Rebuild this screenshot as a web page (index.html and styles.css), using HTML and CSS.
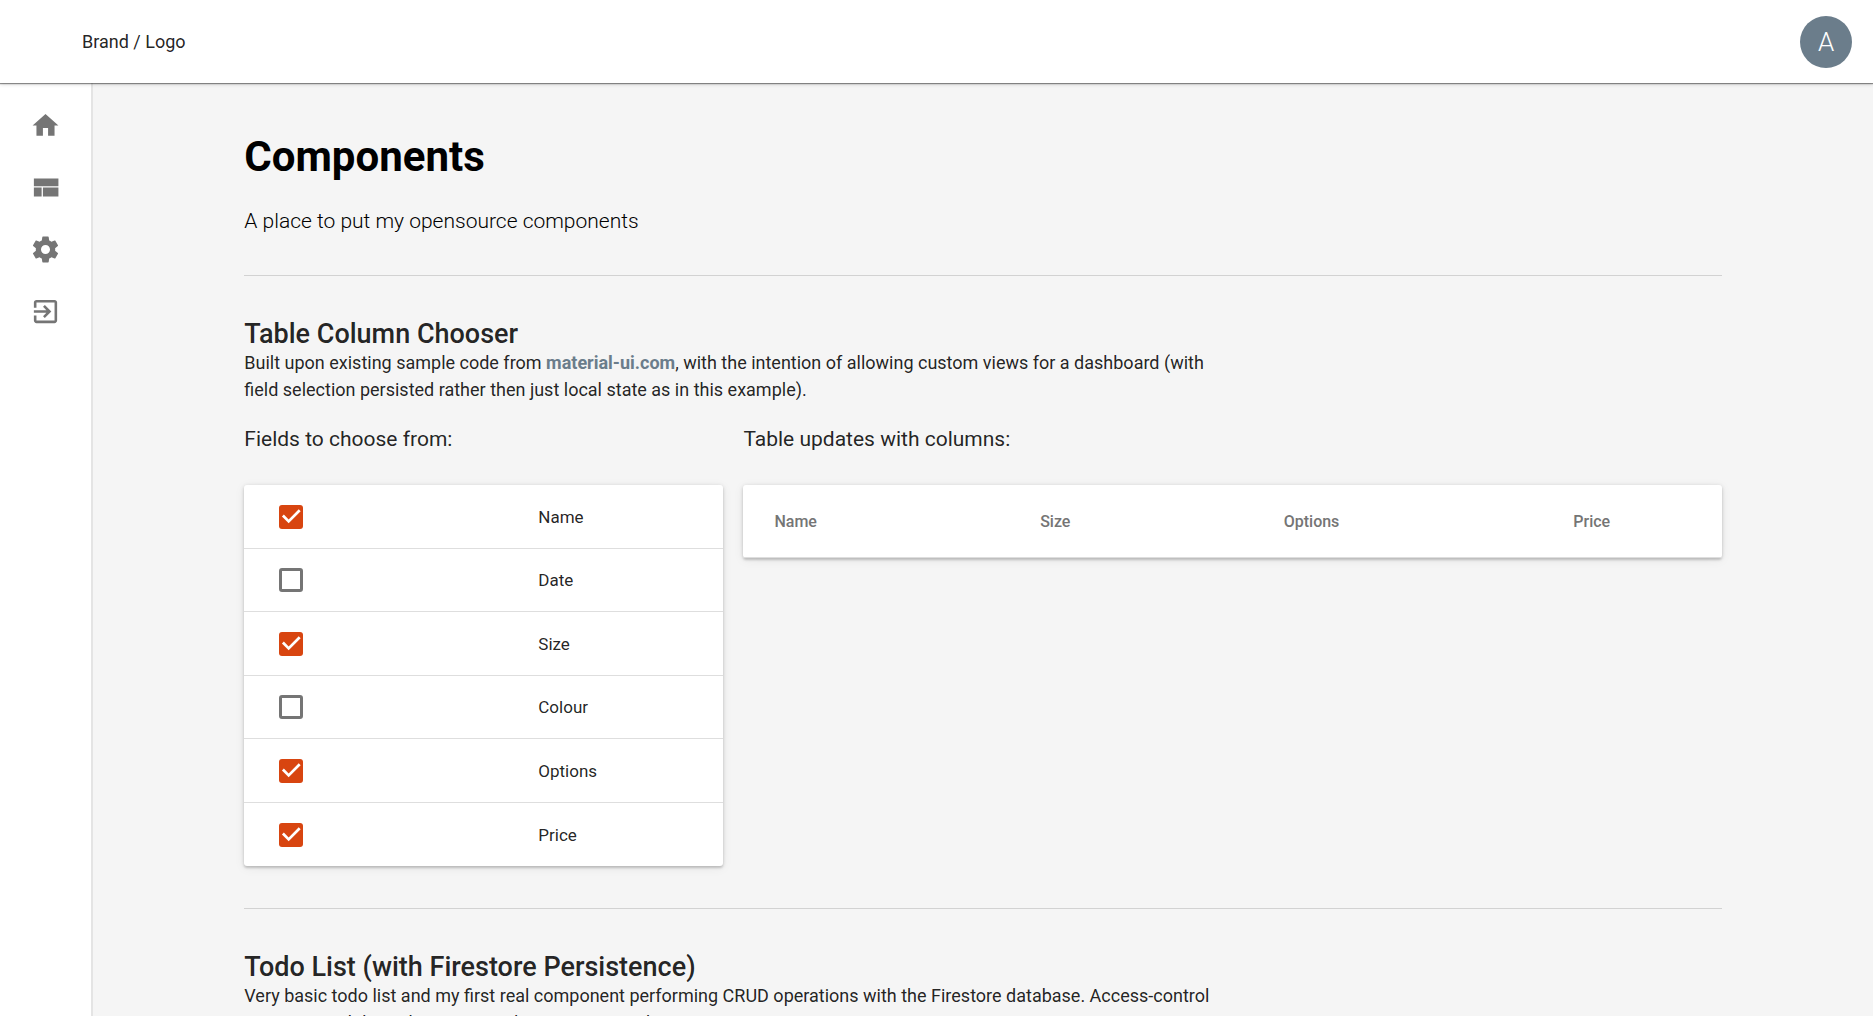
FILE: index.html
```html
<!DOCTYPE html>
<html lang="en">
<head>
<meta charset="utf-8">
<meta name="viewport" content="width=device-width, initial-scale=1">
<title>Components</title>
<link rel="stylesheet" href="styles.css">
</head>
<body>
<div class="app">
  <header class="topbar">
    <span class="brand">Brand / Logo</span>
    <button class="avatar" type="button">A</button>
  </header>
  <div class="shell">
    <nav class="sidebar" aria-label="Main">
      <a class="nav-link" href="#" aria-label="Home"><svg class="icon" viewBox="0 0 24 24"><path d="M10 20v-6h4v6h5v-8h3L12 3 2 12h3v8z"/></svg></a>
      <a class="nav-link" href="#" aria-label="Components"><svg class="icon" viewBox="0 0 24 24"><path d="M3 19h6v-7H3v7zm7 0h12v-7H10v7zM3 5v6h19V5H3z"/></svg></a>
      <a class="nav-link" href="#" aria-label="Settings"><svg class="icon" viewBox="0 0 24 24"><path d="M19.43 12.98c.04-.32.07-.64.07-.98s-.03-.66-.07-.98l2.11-1.65c.19-.15.24-.42.12-.64l-2-3.46c-.12-.22-.39-.3-.61-.22l-2.49 1c-.52-.4-1.08-.73-1.69-.98l-.38-2.65C14.46 2.18 14.25 2 14 2h-4c-.25 0-.46.18-.49.42l-.38 2.65c-.61.25-1.17.59-1.69.98l-2.49-1c-.23-.09-.49 0-.61.22l-2 3.46c-.13.22-.07.49.12.64l2.11 1.65c-.04.32-.07.65-.07.98s.03.66.07.98l-2.11 1.65c-.19.15-.24.42-.12.64l2 3.46c.12.22.39.3.61.22l2.49-1c.52.4 1.08.73 1.69.98l.38 2.65c.03.24.24.42.49.42h4c.25 0 .46-.18.49-.42l.38-2.65c.61-.25 1.17-.59 1.69-.98l2.49 1c.23.09.49 0 .61-.22l2-3.46c.12-.22.07-.49-.12-.64l-2.11-1.65zM12 15.5c-1.93 0-3.5-1.57-3.5-3.5s1.57-3.5 3.5-3.5 3.5 1.57 3.5 3.5-1.57 3.5-3.5 3.5z"/></svg></a>
      <a class="nav-link" href="#" aria-label="Sign out"><svg class="icon" viewBox="0 0 24 24"><path d="M10.09 15.59L11.5 17l5-5-5-5-1.41 1.41L12.67 11H3v2h9.67l-2.58 2.59zM19 3H5c-1.11 0-2 .9-2 2v4h2V5h14v14H5v-4H3v4c0 1.1.89 2 2 2h14c1.1 0 2-.9 2-2V5c0-1.1-.9-2-2-2z"/></svg></a>
    </nav>
    <main class="main">
      <div class="content">
        <section class="intro">
          <h1>Components</h1>
          <p class="lead">A place to put my opensource components</p>
        </section>
        <section class="section">
          <h2>Table Column Chooser</h2>
          <p class="description">Built upon existing sample code from <a href="https://material-ui.com">material-ui.com</a>, with the intention of allowing custom views for a dashboard (with field selection persisted rather then just local state as in this example).</p>
          <div class="chooser">
            <div>
              <h3>Fields to choose from:</h3>
              <table class="card fields">
                <tbody>
                  <tr><td class="tick"><input type="checkbox" id="f-name" checked></td><td><label for="f-name">Name</label></td></tr>
                  <tr><td class="tick"><input type="checkbox" id="f-date"></td><td><label for="f-date">Date</label></td></tr>
                  <tr><td class="tick"><input type="checkbox" id="f-size" checked></td><td><label for="f-size">Size</label></td></tr>
                  <tr><td class="tick"><input type="checkbox" id="f-colour"></td><td><label for="f-colour">Colour</label></td></tr>
                  <tr><td class="tick"><input type="checkbox" id="f-options" checked></td><td><label for="f-options">Options</label></td></tr>
                  <tr><td class="tick"><input type="checkbox" id="f-price" checked></td><td><label for="f-price">Price</label></td></tr>
                </tbody>
              </table>
            </div>
            <div>
              <h3>Table updates with columns:</h3>
              <table class="card preview">
                <thead>
                  <tr><th scope="col">Name</th><th scope="col">Size</th><th scope="col">Options</th><th scope="col">Price</th></tr>
                </thead>
              </table>
            </div>
          </div>
        </section>
        <section class="section">
          <h2>Todo List (with Firestore Persistence)</h2>
          <p class="description">Very basic todo list and my first real component performing CRUD operations with the Firestore database. Access-control is maintained through Firestore rules run server-side.</p>
        </section>
      </div>
    </main>
  </div>
</div>
</body>
</html>
```

FILE: styles.css
```css
* {
  box-sizing: border-box;
}

body {
  margin: 0;
  font-family: Roboto, "Liberation Sans", sans-serif;
  font-size: 18px;
  color: rgba(0, 0, 0, 0.87);
  background: #f5f5f5;
}

h1, h2, h3, p {
  margin: 0;
}

.app {
  display: flex;
  flex-direction: column;
  height: 100vh;
  overflow: hidden;
}

.topbar {
  position: relative;
  flex: none;
  display: flex;
  align-items: center;
  justify-content: space-between;
  height: 83px;
  padding: 0 21px 0 82px;
  background: #fff;
  box-shadow: 0 1px 1px rgba(0, 0, 0, 0.4), 0 1px 4px rgba(0, 0, 0, 0.2);
}

.avatar {
  width: 52px;
  height: 52px;
  padding: 0;
  border: 0;
  border-radius: 50%;
  background: #6b7d8b;
  color: #fff;
  font: 300 26px Roboto, "Liberation Sans", sans-serif;
}

.shell {
  flex: 1;
  display: flex;
  min-height: 0;
}

.sidebar {
  flex: none;
  width: 93px;
  padding-top: 11px;
  background: #fff;
  border-right: 2px solid #e4e4e4;
}

.nav-link {
  display: flex;
  align-items: center;
  justify-content: center;
  height: 62px;
}

.icon {
  width: 31px;
  height: 31px;
  fill: #757575;
}

.main {
  flex: 1;
  min-width: 0;
  overflow: hidden;
}

.content {
  width: 83%;
  margin: 0 auto;
}

.intro {
  padding: 48px 0 40px;
}

h1 {
  font-size: 42px;
  line-height: 52px;
  font-weight: 700;
  color: #000;
}

.lead {
  margin-top: 24px;
  font-size: 21px;
  line-height: 28px;
  font-weight: 300;
  color: #000;
}

.section {
  padding: 43px 0 42px;
  border-top: 1px solid #d2d2d2;
}

h2 {
  font-size: 27px;
  line-height: 30px;
  font-weight: 500;
}

.description {
  max-width: 980px;
  line-height: 27px;
}

.description a {
  color: #6b7d8b;
  font-weight: 700;
  text-decoration: none;
}

.chooser {
  display: grid;
  grid-template-columns: 479fr 978fr;
  gap: 20px;
  align-items: start;
  margin-top: 21px;
}

h3 {
  margin-bottom: 31px;
  font-size: 21px;
  line-height: 30px;
  font-weight: 400;
}

.card {
  width: 100%;
  border-spacing: 0;
  border-radius: 3px;
  background: #fff;
  box-shadow: 0 1px 4px rgba(0, 0, 0, 0.14), 0 2px 2px rgba(0, 0, 0, 0.12), 0 2px 12px rgba(0, 0, 0, 0.06);
}

.fields {
  font-size: 17px;
}

.fields td {
  height: 63px;
  padding: 0;
  border-bottom: 1px solid #dedede;
}

.fields tr:nth-child(odd) td {
  height: 64px;
}

.fields tr:last-child td {
  border-bottom: 0;
}

.fields .tick {
  width: 294px;
  padding-left: 35px;
}

.tick input {
  display: block;
  appearance: none;
  width: 24px;
  height: 24px;
  margin: 0;
  border: 3px solid #757575;
  border-radius: 3px;
}

.tick input:checked {
  border: 0;
  background: #d84510;
}

.tick input:checked::before {
  content: "";
  display: block;
  height: 24px;
  background: #fff;
  clip-path: polygon(39% 78%, 11% 50%, 19% 42%, 39% 62%, 81% 20%, 89% 28%);
}

.preview {
  height: 73px;
}

.preview th {
  padding: 0 73px 0 31px;
  border-bottom: 1px solid #dedede;
  color: #757575;
  font-size: 16px;
  font-weight: 500;
  text-align: left;
}

.preview th:last-child {
  padding-right: 31px;
}
```
